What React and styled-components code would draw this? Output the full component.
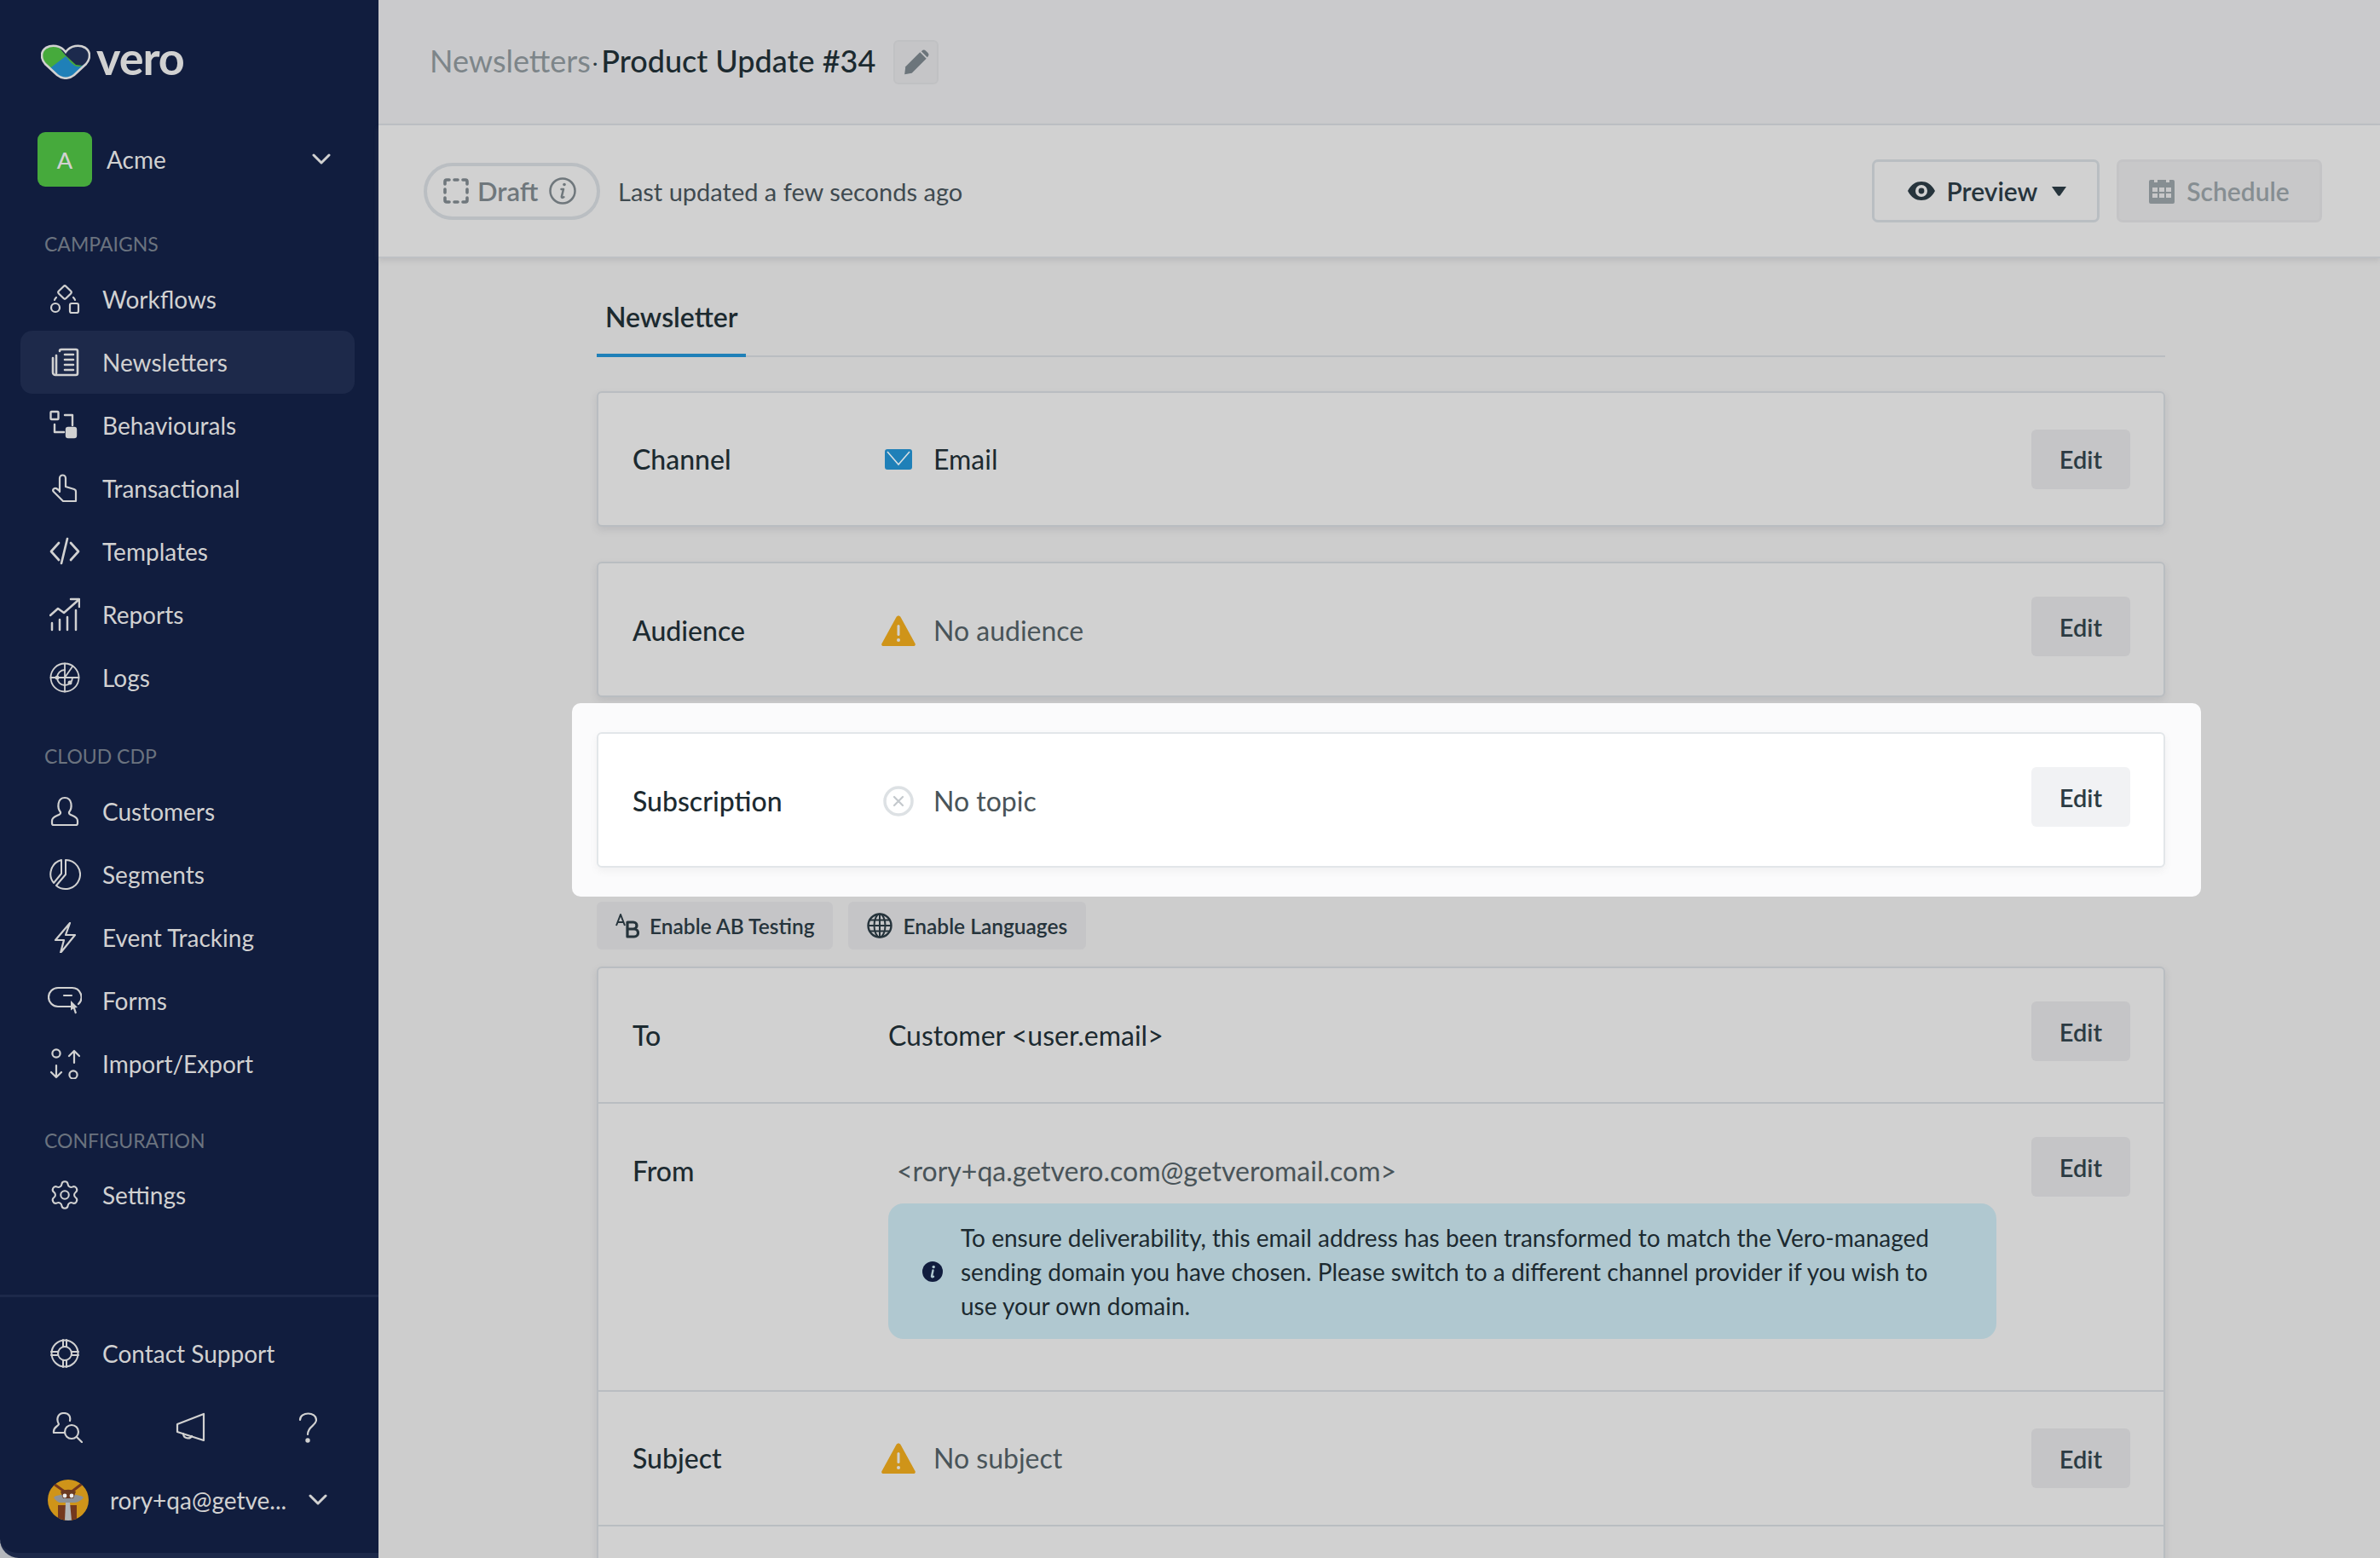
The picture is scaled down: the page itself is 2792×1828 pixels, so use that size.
import React from "react";
import styled, { createGlobalStyle } from "styled-components";
import { Settings as GearIcon } from "lucide-react";

const GlobalStyle = createGlobalStyle`
  html, body {
    margin: 0;
    padding: 0;
    background: #b4b7bc;
    font-family: "Lato", "Open Sans", sans-serif;
  }
  * { box-sizing: border-box; }
`;

// icons, drawn on a 36 box unless noted
const Icon = ({ children, w = 36, h = 36, fill = "none", sw = 2.2 }) => (
  <svg
    width={w}
    height={h}
    viewBox={`0 0 ${w} ${h}`}
    fill={fill}
    stroke="currentColor"
    strokeWidth={sw}
    strokeLinecap="round"
    strokeLinejoin="round"
  >
    {children}
  </svg>
);

const WorkflowsIcon = () => (
  <Icon>
    <rect x="12" y="4" width="12" height="12" rx="2" transform="rotate(45 18 10)" />
    <circle cx="7" cy="28" r="5" />
    <rect x="24" y="23" width="10" height="11" rx="2" />
    <path d="M6 19c0-1 1-2 2-3M30 19c0-1-1-2-2-3" />
  </Icon>
);
const NewslettersIcon = () => (
  <Icon sw={2.6}>
    <path d="M12 5a2 2 0 0 1 2-2h17a2 2 0 0 1 2 2v26a2 2 0 0 1-2 2H7a3 3 0 0 1-3-3V13" />
    <path d="M8 10v21M18 9h10M18 15h10M18 21h10M18 27h10" />
  </Icon>
);
const BehaviouralsIcon = () => (
  <Icon sw={2.4}>
    <rect x="1.5" y="2" width="9" height="9" rx="1" />
    <path d="M18 6h9v12M6 17v9h11" />
    <rect x="20" y="21" width="11" height="11" rx="2" fill="currentColor" />
  </Icon>
);
const TransactionalIcon = () => (
  <Icon>
    <path d="M12 22V6a3.5 3.5 0 0 1 7 0v10l10 3a3 3 0 0 1 2 3v11H16L5 22c-2-2 0-5 3-4l4 3" />
  </Icon>
);
const TemplatesIcon = () => (
  <Icon sw={2.7}>
    <path d="M11 8 2 18l9 10M25 8l9 10-9 10M21 3l-7 29" />
  </Icon>
);
const ReportsIcon = () => (
  <Icon h={40} sw={2.5}>
    <path d="M3 30v8M12 26v12M21 23v15M31 15v23" />
    <path d="M1 21l9-8 7 5L34 3M25 2h10v9" />
  </Icon>
);
const LogsIcon = () => (
  <Icon sw={1.8}>
    <circle cx="18" cy="18" r="16.5" />
    <path d="M18 1.5v33M1.5 18h33M18 18l9-13" />
    <path d="M9 18a9 9 0 0 1 9-9M27 18a9 9 0 0 1-18 0" />
    <circle cx="9" cy="18" r="1.6" fill="currentColor" />
    <circle cx="24" cy="24" r="1.6" fill="currentColor" />
  </Icon>
);
const CustomersIcon = () => (
  <Icon>
    <path d="M13 19C9 14 9 2 18 2s9 12 5 17v1c0 3 10 3 10 9v3a2 2 0 0 1-2 2H5a2 2 0 0 1-2-2v-3c0-6 10-6 10-9z" />
  </Icon>
);
const SegmentsIcon = () => (
  <Icon w={38} h={38} sw={2}>
    <path d="M20 2a17 17 0 1 1-11 30l11-13z" />
    <path d="M15 2A17 17 0 0 0 6 29l9-11z" />
  </Icon>
);
const EventIcon = () => (
  <Icon>
    <path d="M24 1 7 21h10l-4 15 17-21H19z" />
  </Icon>
);
const FormsIcon = () => (
  <Icon w={40} h={36}>
    <path d="M28 25H12a11 11 0 0 1 0-22h16a11 11 0 0 1 8 19" />
    <path d="M19 12h9" />
    <path d="M27 18l8 8-3 .5 2 6-2 1-2-6-3 2z" fill="currentColor" stroke="none" />
  </Icon>
);
const ImportIcon = () => (
  <Icon>
    <circle cx="8" cy="6" r="4.6" />
    <circle cx="28" cy="31" r="4.6" />
    <path d="M29 3v14M23 9l6-6 6 6M8 20v14M2 28l6 6 6-6" />
  </Icon>
);
const SupportIcon = () => (
  <Icon w={36} h={36} sw={2}>
    <circle cx="18" cy="18" r="15.5" />
    <circle cx="18" cy="18" r="8" />
    <path d="M16 2v8M20 2v8M16 26v8M20 26v8M2 16h8M2 20h8M26 16h8M26 20h8" />
  </Icon>
);
const UserSearchIcon = () => (
  <Icon>
    <path d="M15 24H2c-1-7 5-7 6-10C5 9 6 1 14 1c6 0 8 4 7 9" />
    <circle cx="23" cy="23" r="8" />
    <path d="M29 29l6 6" />
  </Icon>
);
const MegaphoneIcon = () => (
  <Icon>
    <path d="M33 2v31L2 23v-9z" />
    <path d="M9 25c0 6 8 7 10 3" />
  </Icon>
);
const HelpIcon = () => (
  <Icon w={22} h={36}>
    <path d="M2 9c0-10 19-10 19 0 0 7-10 7-10 17" />
    <circle cx="11" cy="33" r="1.6" fill="currentColor" />
  </Icon>
);
const Chevron = () => (
  <svg width="22" height="14" viewBox="0 0 22 14" fill="none" stroke="currentColor" strokeWidth="3" strokeLinecap="round" strokeLinejoin="round">
    <path d="M2 2l9 9 9-9" />
  </svg>
);
const HeartLogo = () => (
  <svg width="58" height="41" viewBox="0 0 58 41">
    <defs>
      <clipPath id="heartClip">
        <path d="M29 9C23 1 13 0 6 4-1 9 0 17 5 23l14 13c6 5 14 5 20 0l14-13c5-6 6-14-1-19-7-4-17-3-23 5z" />
      </clipPath>
    </defs>
    <g clipPath="url(#heartClip)">
      <rect width="58" height="41" fill="#46aa3c" />
      <path d="M58 0H18l11 13 12 11 17 2z" fill="#1c2a4d" />
      <path d="M0 41h58V20L46 26c-6 1-10-3-17-12L8 30z" fill="#1f80b8" />
    </g>
    <path d="M29 9C23 1 13 0 6 4-1 9 0 17 5 23l14 13c6 5 14 5 20 0l14-13c5-6 6-14-1-19-7-4-17-3-23 5z" fill="none" stroke="#d1d1d1" strokeWidth="2.6" />
  </svg>
);
const CoyoteAvatar = () => (
  <svg width="48" height="48" viewBox="0 0 48 48">
    <circle cx="24" cy="24" r="24" fill="#cf9419" />
    <clipPath id="avatarClip"><circle cx="24" cy="24" r="24" /></clipPath>
    <g clipPath="url(#avatarClip)">
      <path d="M12 30h22v18H12z" fill="#74381f" />
      <path d="M7 5l14 10M40 5L27 15" stroke="#74381f" strokeWidth="3" />
      <path d="M7 21c4-5 30-5 35 0-4 5-9 6-11 6H16c-4 0-6-2-9-6z" fill="#8d9197" />
      <path d="M15 14c6-3 12-3 18 0l-3 8H18z" fill="#6a3a22" />
      <circle cx="20" cy="19" r="2.4" fill="#eee" />
      <circle cx="28" cy="19" r="2.4" fill="#eee" />
      <path d="M21 27h5l2 21h-8z" fill="#b3b6ba" />
    </g>
  </svg>
);
const PencilIcon = () => (
  <svg width="34" height="34" viewBox="0 0 32 32" fill="currentColor">
    <path d="M4 21 20 5l7 7-16 16-8 1.5z" />
    <path d="M22 3.5c1.5-1.5 3-1.5 4.5 0l2 2c1.5 1.5 1.5 3 0 4.5L28 10.5 21.5 4z" />
  </svg>
);
const DashedSquare = () => (
  <svg width="30" height="30" viewBox="0 0 30 30" fill="none" stroke="currentColor" strokeWidth="3.6" strokeLinecap="round">
    <path d="M2 7V4a2 2 0 0 1 2-2h3M13 2h4M23 2h3a2 2 0 0 1 2 2v3M28 13v4M28 23v3a2 2 0 0 1-2 2h-3M17 28h-4M7 28H4a2 2 0 0 1-2-2v-3M2 17v-4" />
  </svg>
);
const InfoOutline = () => (
  <svg width="32" height="32" viewBox="0 0 32 32" fill="none" stroke="currentColor" strokeWidth="2.5" strokeLinecap="round">
    <circle cx="16" cy="16" r="14.5" />
    <path d="M17 14l-2.200 9c0 1 1.200 1.200 2.600.3M14.500 14H17" />
    <circle cx="18" cy="8.500" r="1.800" fill="currentColor" stroke="none" />
  </svg>
);
const EyeIcon = () => (
  <svg width="32" height="22" viewBox="0 0 32 22">
    <path fillRule="evenodd" fill="currentColor" d="M0 11C4 3 10 0 16 0s12 3 16 11c-4 8-10 11-16 11S4 19 0 11zm16 7a7 7 0 1 0 0-14 7 7 0 0 0 0 14z" />
    <circle cx="16" cy="11" r="3.4" fill="currentColor" />
  </svg>
);
const Caret = () => (
  <svg width="17" height="11" viewBox="0 0 17 11" fill="currentColor">
    <path d="M0 0h17l-7 10a2 2 0 0 1-3 0z" />
  </svg>
);
const CalendarIcon = () => (
  <svg width="30" height="30" viewBox="0 0 30 30">
    <path fillRule="evenodd" fill="currentColor" d="M2 2h4v3h4V2h10v3h4V2h4a2 2 0 0 1 2 2v24a2 2 0 0 1-2 2H2a2 2 0 0 1-2-2V4a2 2 0 0 1 2-2zM4 11v5h6v-5zm8 0v5h6v-5zm8 0v5h6v-5zM4 18v5h6v-5zm8 0v5h6v-5zm8 0v5h6v-5z" />
  </svg>
);
const MailIcon = () => (
  <svg width="32" height="24" viewBox="0 0 32 24">
    <rect width="32" height="24" rx="3" fill="#1f80b8" />
    <path d="M3 3l13 15L29 3" fill="none" stroke="#d7dfe3" strokeWidth="1.6" />
  </svg>
);
const WarnIcon = () => (
  <svg width="40" height="36" viewBox="0 0 40 36">
    <path d="M17.500 2c1.200-2 3.800-2 5 0l17 31c.8 1.500 0 3-2 3H2.500c-2 0-2.800-1.500-2-3z" fill="#cf9419" />
    <rect x="18.500" y="11" width="3" height="13" rx="1.500" fill="#d1d1d1" />
    <circle cx="20" cy="29" r="2" fill="#d1d1d1" />
  </svg>
);
const NoTopicIcon = () => (
  <svg width="36" height="36" viewBox="0 0 36 36" fill="none" stroke="#dde1e4">
    <circle cx="18" cy="18" r="16" strokeWidth="3.500" />
    <path d="M13 13l10 10M23 13 13 23" stroke="#c4c9cd" strokeWidth="2.200" strokeLinecap="round" />
  </svg>
);
const AbIcon = () => (
  <svg width="28" height="30" viewBox="0 0 28 30" fill="none" stroke="currentColor" strokeLinejoin="round">
    <path d="M1 15 6 2l5 13M3 11h6" strokeWidth="2" />
    <path d="M14 11h7a4 4 0 0 1 0 8h-7zM14 19h8a4.500 4.500 0 0 1 0 9h-8z" strokeWidth="3.200" />
  </svg>
);
const GlobeIcon = () => (
  <svg width="30" height="30" viewBox="0 0 30 30" fill="none" stroke="currentColor" strokeWidth="2">
    <circle cx="15" cy="15" r="13.500" strokeWidth="2.400" />
    <ellipse cx="15" cy="15" rx="6.500" ry="13.500" />
    <path d="M15 1.500v27M1.500 15h27M3.500 8.500h23M3.500 21.500h23" />
  </svg>
);
const InfoFilled = () => (
  <svg width="24" height="24" viewBox="0 0 24 24">
    <circle cx="12" cy="12" r="12" fill="#111d3e" />
    <path d="M12.500 10.500 11 17.500c0 .8 1 1 2 .2" fill="none" stroke="#b0c8d0" strokeWidth="2.400" strokeLinecap="round" />
    <circle cx="13.200" cy="6.500" r="1.700" fill="#b0c8d0" />
  </svg>
);

const campaigns = [
  { label: "Workflows", icon: <WorkflowsIcon /> },
  { label: "Newsletters", icon: <NewslettersIcon />, active: true },
  { label: "Behaviourals", icon: <BehaviouralsIcon /> },
  { label: "Transactional", icon: <TransactionalIcon /> },
  { label: "Templates", icon: <TemplatesIcon /> },
  { label: "Reports", icon: <ReportsIcon /> },
  { label: "Logs", icon: <LogsIcon /> },
];
const cdp = [
  { label: "Customers", icon: <CustomersIcon /> },
  { label: "Segments", icon: <SegmentsIcon /> },
  { label: "Event Tracking", icon: <EventIcon /> },
  { label: "Forms", icon: <FormsIcon /> },
  { label: "Import/Export", icon: <ImportIcon /> },
];

const NavList = ({ items }) =>
  items.map((item) => (
    <NavItem key={item.label} $active={item.active}>
      <NavIcon>{item.icon}</NavIcon>
      {item.label}
    </NavItem>
  ));

const App = () => (
  <Page>
    <GlobalStyle />
    <Sidebar>
      <LogoRow>
        <HeartLogo />
        <LogoText>vero</LogoText>
      </LogoRow>
      <AccountRow>
        <AccountBadge>A</AccountBadge>
        <AccountName>Acme</AccountName>
        <Chevron />
      </AccountRow>
      <SectionLabel>CAMPAIGNS</SectionLabel>
      <NavList items={campaigns} />
      <SectionLabel>CLOUD CDP</SectionLabel>
      <NavList items={cdp} />
      <SectionLabel $tight>CONFIGURATION</SectionLabel>
      <NavItem>
        <NavIcon>
          <GearIcon size={38} strokeWidth={1.3} />
        </NavIcon>
        Settings
      </NavItem>
      <SidebarFooter>
        <NavItem>
          <NavIcon>
            <SupportIcon />
          </NavIcon>
          Contact Support
        </NavItem>
        <FooterIcons>
          <UserSearchIcon />
          <MegaphoneIcon />
          <HelpIcon />
        </FooterIcons>
        <UserRow>
          <CoyoteAvatar />
          <UserName>rory+qa@getve...</UserName>
          <Chevron />
        </UserRow>
      </SidebarFooter>
    </Sidebar>

    <Main>
      <TitleBar>
        <Crumb>Newsletters</Crumb>
        <CrumbDot>·</CrumbDot>
        <Title>Product Update #34</Title>
        <PencilButton>
          <PencilIcon />
        </PencilButton>
      </TitleBar>
      <StatusBar>
        <DraftPill>
          <DashedSquare />
          <DraftLabel>Draft</DraftLabel>
          <InfoOutline />
        </DraftPill>
        <Updated>Last updated a few seconds ago</Updated>
        <ActionGroup>
          <PreviewButton>
            <EyeIcon />
            <span>Preview</span>
            <Caret />
          </PreviewButton>
          <ScheduleButton>
            <CalendarIcon />
            <span>Schedule</span>
          </ScheduleButton>
        </ActionGroup>
      </StatusBar>

      <Content>
        <TabBar>
          <Tab>Newsletter</Tab>
        </TabBar>

        <Card $first>
          <Row $center>
            <RowLabel>Channel</RowLabel>
            <RowValue>
              <ValueIcon>
                <MailIcon />
              </ValueIcon>
              <Strong>Email</Strong>
            </RowValue>
            <EditButton>Edit</EditButton>
          </Row>
        </Card>

        <Card>
          <Row>
            <RowLabel>Audience</RowLabel>
            <RowValue>
              <ValueIcon>
                <WarnIcon />
              </ValueIcon>
              <Muted>No audience</Muted>
            </RowValue>
            <EditButton>Edit</EditButton>
          </Row>
        </Card>

        <Spotlight>
          <Card $lit>
            <Row>
              <RowLabel>Subscription</RowLabel>
              <RowValue>
                <ValueIcon>
                  <NoTopicIcon />
                </ValueIcon>
                <Muted>No topic</Muted>
              </RowValue>
              <EditButton $lit>Edit</EditButton>
            </Row>
          </Card>
        </Spotlight>

        <EnableRow>
          <EnableButton>
            <AbIcon />
            Enable AB Testing
          </EnableButton>
          <EnableButton>
            <GlobeIcon />
            Enable Languages
          </EnableButton>
        </EnableRow>

        <GroupCard>
          <Row $h={157}>
            <RowLabel>To</RowLabel>
            <RowValue>
              <Strong>Customer &lt;user.email&gt;</Strong>
            </RowValue>
            <EditButton>Edit</EditButton>
          </Row>
          <Row $h={338}>
            <RowLabel>From</RowLabel>
            <FromValue>
              <Address>&lt;rory+qa.getvero.com@getveromail.com&gt;</Address>
              <Notice>
                <InfoFilled />
                <NoticeText>
                  To ensure deliverability, this email address has been
                  transformed to match the Vero-managed sending domain you have
                  chosen. Please switch to a different channel provider if you
                  wish to use your own domain.
                </NoticeText>
              </Notice>
            </FromValue>
            <EditButton>Edit</EditButton>
          </Row>
          <Row $center $h={158}>
            <RowLabel>Subject</RowLabel>
            <RowValue>
              <ValueIcon>
                <WarnIcon />
              </ValueIcon>
              <Muted>No subject</Muted>
            </RowValue>
            <EditButton>Edit</EditButton>
          </Row>
          <Row />
        </GroupCard>
      </Content>
    </Main>
  </Page>
);

const Page = styled.div`
  display: flex;
  width: 2792px;
  height: 1828px;
  overflow: hidden;
  color: #1c2a30;
`;

const Sidebar = styled.aside`
  width: 444px;
  height: 100%;
  flex: none;
  display: flex;
  flex-direction: column;
  background: #111d3e;
  color: #d1d1d1;
  border-bottom: 6px solid #1d294a;
  border-bottom-left-radius: 22px;
`;

const LogoRow = styled.div`
  display: flex;
  align-items: center;
  gap: 7px;
  height: 41px;
  margin: 52px 0 0 48px;
`;

const LogoText = styled.span`
  font-size: 54px;
  font-weight: 700;
  line-height: 41px;
  letter-spacing: -1px;
  margin-top: -10px;
`;

const AccountRow = styled.div`
  display: flex;
  align-items: center;
  height: 64px;
  margin: 62px 56px 12px 44px;
`;

const AccountBadge = styled.div`
  width: 64px;
  height: 64px;
  display: flex;
  align-items: center;
  justify-content: center;
  border-radius: 9px;
  background: #46aa3c;
  font-size: 27px;
  font-weight: 500;
`;

const AccountName = styled.span`
  flex: 1;
  margin-left: 17px;
  font-size: 28px;
`;

const SectionLabel = styled.div`
  height: 46px;
  margin: ${(p) => (p.$tight ? "30px 0 4px 52px" : "32px 0 5px 52px")};
  line-height: 46px;
  font-size: 23px;
  color: #6b737f;
`;

const NavItem = styled.div`
  display: flex;
  align-items: center;
  flex: none;
  height: 74px;
  margin: 0 28px 0 24px;
  padding-left: 28px;
  border-radius: 14px;
  font-size: 28px;
  background: ${(p) => (p.$active ? "#1d294a" : "transparent")};
`;

const NavIcon = styled.span`
  display: flex;
  align-items: center;
  justify-content: center;
  width: 48px;
  margin-right: 20px;
`;

const SidebarFooter = styled.div`
  margin-top: auto;
  border-top: 3px solid #1d294a;
  padding-top: 29px;
`;

const FooterIcons = styled.div`
  display: flex;
  align-items: center;
  justify-content: space-between;
  height: 40px;
  margin: 30px 72px 0 61px;
`;

const UserRow = styled.div`
  display: flex;
  align-items: center;
  height: 48px;
  margin: 41px 60px 38px 56px;
`;

const UserName = styled.span`
  flex: 1;
  margin-left: 25px;
  font-size: 28px;
`;

const Main = styled.main`
  flex: 1;
  min-width: 0;
  display: flex;
  flex-direction: column;
  background: #cdcdcd;
`;

const TitleBar = styled.header`
  flex: none;
  display: flex;
  align-items: center;
  height: 147px;
  padding-left: 60px;
  background: #cacacc;
  border-bottom: 2px solid #bdc0c4;
`;

const Crumb = styled.span`
  margin-top: -3px;
  font-size: 36px;
  color: #7d8589;
`;

const CrumbDot = styled.span`
  margin: 0 4px 0 2px;
  font-size: 24px;
  color: #2c3b43;
`;

const Title = styled.h1`
  margin: -3px 0 0;
  font-size: 36px;
  font-weight: 500;
  color: #1c2a30;
`;

const PencilButton = styled.button`
  display: flex;
  align-items: center;
  justify-content: center;
  width: 53px;
  height: 52px;
  margin-left: 21px;
  padding: 0;
  border: 2px solid #c0c1c3;
  border-radius: 6px;
  background: #c5c5c7;
  color: #6c757b;
`;

const StatusBar = styled.div`
  flex: none;
  display: flex;
  align-items: center;
  height: 156px;
  padding: 0 68px 0 53px;
  background: #d1d1d1;
  border-bottom: 2px solid #bdc0c4;
  box-shadow: 0 3px 6px rgba(120, 120, 125, 0.2);
`;

const DraftPill = styled.div`
  display: flex;
  align-items: center;
  width: 207px;
  height: 67px;
  padding: 0 0 0 19px;
  border: 4px solid #babec2;
  border-radius: 34px;
  color: #6f777c;
`;

const DraftLabel = styled.span`
  margin: 0 13px 0 10px;
  font-size: 31px;
  font-weight: 600;
`;

const Updated = styled.span`
  margin-left: 21px;
  font-size: 29px;
  color: #3f4a50;
`;

const ActionGroup = styled.div`
  display: flex;
  gap: 20px;
  margin-left: auto;
`;

const PreviewButton = styled.button`
  display: flex;
  align-items: center;
  justify-content: center;
  gap: 14px;
  width: 267px;
  height: 74px;
  padding: 0 0 0 3px;
  border: 3px solid #b9bec2;
  border-radius: 7px;
  background: transparent;
  color: #26343c;
  font: 600 30px "Lato", sans-serif;
  & > svg:last-child:not(:first-child) {
    margin-left: 3px;
  }
`;

const ScheduleButton = styled(PreviewButton)`
  width: 241px;
  padding: 0;
  border-color: #c4c4c6;
  background: #c8c8c9;
  color: #868e92;
`;

const Content = styled.div`
  flex: 1;
  min-height: 0;
  padding: 0 252px 0 256px;
`;

const TabBar = styled.div`
  height: 116px;
  display: flex;
  align-items: flex-end;
  border-bottom: 2px solid #b9bdc1;
`;

const Tab = styled.div`
  width: 175px;
  height: 74px;
  margin-bottom: -2px;
  padding: 8px 0 0 10px;
  border-bottom: 4px solid #1f80b8;
  font-size: 32px;
  font-weight: 600;
  line-height: 38px;
`;

const Card = styled.section`
  position: relative;
  margin-top: ${(p) => (p.$lit ? "0" : p.$first ? "40px" : "41px")};
  border: 2px solid ${(p) => (p.$lit ? "#e2e6e9" : "#b9bdc1")};
  border-radius: 6px;
  background: ${(p) => (p.$lit ? "#fff" : "#d1d1d1")};
  box-shadow: 0 4px 9px rgba(110, 110, 120, ${(p) => (p.$lit ? 0.08 : 0.18)});
`;

const Spotlight = styled.div`
  position: relative;
  margin-top: 41px;
  &::before {
    content: "";
    position: absolute;
    inset: -34px -42px -34px -29px;
    border-radius: 10px;
    background: #fbfbfc;
  }
`;

const Row = styled.div`
  --text-top: ${(p) => (p.$center ? "0" : "20px")};
  display: flex;
  align-items: ${(p) => (p.$center ? "center" : "flex-start")};
  min-height: ${(p) => p.$h || 155}px;
  padding: ${(p) => (p.$center ? "0" : "39px")} 39px 0 40px;
  & + & {
    border-top: 2px solid #b9bdc1;
  }
`;

const RowLabel = styled.div`
  flex: none;
  width: 300px;
  margin-top: var(--text-top);
  font-size: 32px;
  font-weight: 500;
  line-height: 40px;
`;

const RowValue = styled.div`
  flex: 1;
  display: flex;
  align-items: center;
  min-height: 40px;
  margin-top: var(--text-top);
  font-size: 32px;
  line-height: 40px;
`;

const ValueIcon = styled.span`
  display: flex;
  align-items: center;
  justify-content: center;
  width: 40px;
  margin: 0 21px 0 -8px;
`;

const Strong = styled.span`
  color: #1c2a30;
`;

const Muted = styled.span`
  color: #495459;
`;

const EditButton = styled.button`
  flex: none;
  width: 116px;
  height: 70px;
  padding: 0;
  border: 0;
  border-radius: 6px;
  background: ${(p) => (p.$lit ? "#f1f2f4" : "#c5c5c7")};
  color: #2c3b43;
  font: 600 29px "Lato", sans-serif;
`;

const EnableRow = styled.div`
  position: relative;
  display: flex;
  gap: 18px;
  margin-top: 40px;
  margin-bottom: -21px;
`;

const EnableButton = styled.button`
  display: flex;
  align-items: center;
  gap: 12px;
  height: 56px;
  padding: 0 22px 0 22px;
  border: 0;
  border-radius: 6px;
  background: #c5c5c7;
  color: #26343c;
  font: 600 24.5px "Lato", sans-serif;
`;

const GroupCard = styled(Card)``;

const FromValue = styled.div`
  flex: 1;
  min-width: 0;
  margin-top: var(--text-top);
`;

const Address = styled.div`
  padding-left: 10px;
  font-size: 32px;
  line-height: 40px;
  color: #495459;
`;

const Notice = styled.div`
  display: flex;
  align-items: center;
  gap: 21px;
  width: 1300px;
  height: 159px;
  margin-top: 18px;
  padding: 0 55px 0 40px;
  border-radius: 18px;
  background: #b0c8d0;
  & > svg {
    flex: none;
  }
`;

const NoticeText = styled.p`
  margin: 0;
  font-size: 28px;
  line-height: 40px;
  color: #1c2a30;
`;

export default App;
